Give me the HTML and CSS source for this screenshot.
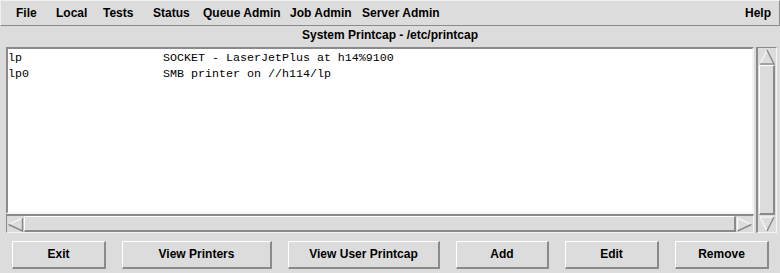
FILE: index.html
```html
<!DOCTYPE html>
<html>
<head>
<meta charset="utf-8">
<link rel="stylesheet" href="styles.css">
</head>
<body>
<div class="app">
  <div class="menubar">
    <span class="mi m-file">File</span>
    <span class="mi m-local">Local</span>
    <span class="mi m-tests">Tests</span>
    <span class="mi m-status">Status</span>
    <span class="mi m-queue">Queue Admin</span>
    <span class="mi m-job">Job Admin</span>
    <span class="mi m-server">Server Admin</span>
    <span class="spacer"></span>
    <span class="mi m-help">Help</span>
  </div>
  <div class="title">System Printcap - /etc/printcap</div>
  <div class="main">
    <div class="leftcol">
      <div class="list">
        <div class="row"><span class="c1">lp</span><span class="c2">SOCKET - LaserJetPlus at h14%9100</span></div>
        <div class="row"><span class="c1">lp0</span><span class="c2">SMB printer on //h114/lp</span></div>
      </div>
      <div class="hscroll">
        <div class="arrow">
          <svg width="17" height="15" viewBox="0 0 17 15"><path d="M15.5 1 L1.5 7.5 L15.5 14 Z" fill="#dcdcdc" stroke="#ffffff" stroke-width="1"/><path d="M1.5 7.5 L15.5 14 L15.5 1" fill="none" stroke="#8a8a8a" stroke-width="1.5"/></svg>
        </div>
        <div class="hslider"></div>
        <div class="arrow">
          <svg width="17" height="15" viewBox="0 0 17 15"><path d="M1.5 1 L15.5 7.5 L1.5 14 Z" fill="#dcdcdc" stroke="#ffffff" stroke-width="1"/><path d="M1.5 14 L15.5 7.5" fill="none" stroke="#8a8a8a" stroke-width="1.5"/></svg>
        </div>
      </div>
    </div>
    <div class="vscroll">
      <div class="varrow">
        <svg width="16" height="16" viewBox="0 0 16 16"><path d="M8 1 L1 15 L15 15 Z" fill="#dcdcdc" stroke="#ffffff" stroke-width="1"/><path d="M8 1 L15 15 L1 15" fill="none" stroke="#8a8a8a" stroke-width="1.5"/></svg>
      </div>
      <div class="vslider"></div>
      <div class="varrow">
        <svg width="16" height="16" viewBox="0 0 16 16"><path d="M1 1 L15 1 L8 15 Z" fill="#dcdcdc" stroke="#ffffff" stroke-width="1"/><path d="M8 15 L15 1" fill="none" stroke="#8a8a8a" stroke-width="1.5"/></svg>
      </div>
    </div>
  </div>
  <div class="buttons">
    <button class="btn w94">Exit</button>
    <button class="btn w150">View Printers</button>
    <button class="btn w152">View User Printcap</button>
    <button class="btn w93">Add</button>
    <button class="btn w94">Edit</button>
    <button class="btn w94">Remove</button>
  </div>
</div>
</body>
</html>
```
FILE: styles.css
```css
* { box-sizing: border-box; }
html, body { margin: 0; padding: 0; }
body {
  background: #dcdcdc;
  width: 780px;
  height: 273px;
  overflow: hidden;
  font-family: "Liberation Sans", Arial, sans-serif;
  color: #000;
}
.app { width: 780px; height: 273px; }
.menubar {
  height: 26px;
  display: flex;
  align-items: center;
  border-top: 1px solid #f0f0f0;
  border-left: 1px solid #f0f0f0;
  border-bottom: 1px solid #8a8a8a;
  border-right: 1px solid #8a8a8a;
  font-weight: bold;
  font-size: 12px;
  padding-left: 15px;
  padding-right: 8px;
}
.mi { white-space: nowrap; }
.m-file { width: 40px; }
.m-local { width: 47px; }
.m-tests { width: 50px; }
.m-status { width: 50px; }
.m-queue { width: 87px; }
.m-job { width: 72px; }
.spacer { flex: 1; }
.title {
  height: 21px;
  text-align: center;
  font-weight: bold;
  font-size: 12px;
  line-height: 18px;
}
.main {
  display: flex;
  margin-left: 6px;
  gap: 2px;
  height: 186px;
}
.leftcol { width: 748px; display: flex; flex-direction: column; }
.list {
  height: 167px;
  background: #fff;
  border-top: 2px solid #8a8a8a;
  border-left: 2px solid #8a8a8a;
  border-bottom: 2px solid #f4f4f4;
  border-right: 2px solid #f4f4f4;
  padding: 1px 0 0 0;
  font-family: "Liberation Mono", "Courier New", monospace;
  font-size: 11.67px;
}
.row { display: flex; height: 16px; line-height: 16px; white-space: pre; }
.c1 { width: 155px; }
.hscroll {
  height: 19px;
  display: flex;
  border-top: 2px solid #8a8a8a;
  border-left: 1px solid #8a8a8a;
  border-bottom: 1px solid #f4f4f4;
  border-right: 1px solid #f4f4f4;
  align-items: stretch;
}
.arrow { width: 17px; display: flex; align-items: center; }
.hslider {
  flex: 1;
  border-top: 1px solid #fff;
  border-left: 1px solid #fff;
  border-bottom: 2px solid #8a8a8a;
  border-right: 2px solid #8a8a8a;
}
.vscroll {
  width: 21px;
  display: flex;
  flex-direction: column;
  border-left: 2px solid #8a8a8a;
  border-top: 1px solid #8a8a8a;
  border-right: 1px solid #f4f4f4;
  border-bottom: 1px solid #f4f4f4;
  padding: 0 1px;
}
.varrow { height: 17px; display: flex; justify-content: center; align-items: center; }
.vslider {
  flex: 1;
  border-top: 1px solid #fff;
  border-left: 1px solid #fff;
  border-bottom: 2px solid #8a8a8a;
  border-right: 2px solid #8a8a8a;
}
.buttons {
  display: flex;
  gap: 16px;
  margin-top: 8px;
  padding-left: 12px;
}
.btn {
  height: 28px;
  background: #dcdcdc;
  border-top: 1px solid #fff;
  border-left: 1px solid #fff;
  border-bottom: 2px solid #8a8a8a;
  border-right: 2px solid #8a8a8a;
  font-family: "Liberation Sans", Arial, sans-serif;
  font-weight: bold;
  font-size: 12px;
  color: #000;
  padding: 0 0 1px 0;
  margin: 0;
}
.w94 { width: 94px; }
.w150 { width: 150px; }
.w152 { width: 152px; }
.w93 { width: 93px; }
```
